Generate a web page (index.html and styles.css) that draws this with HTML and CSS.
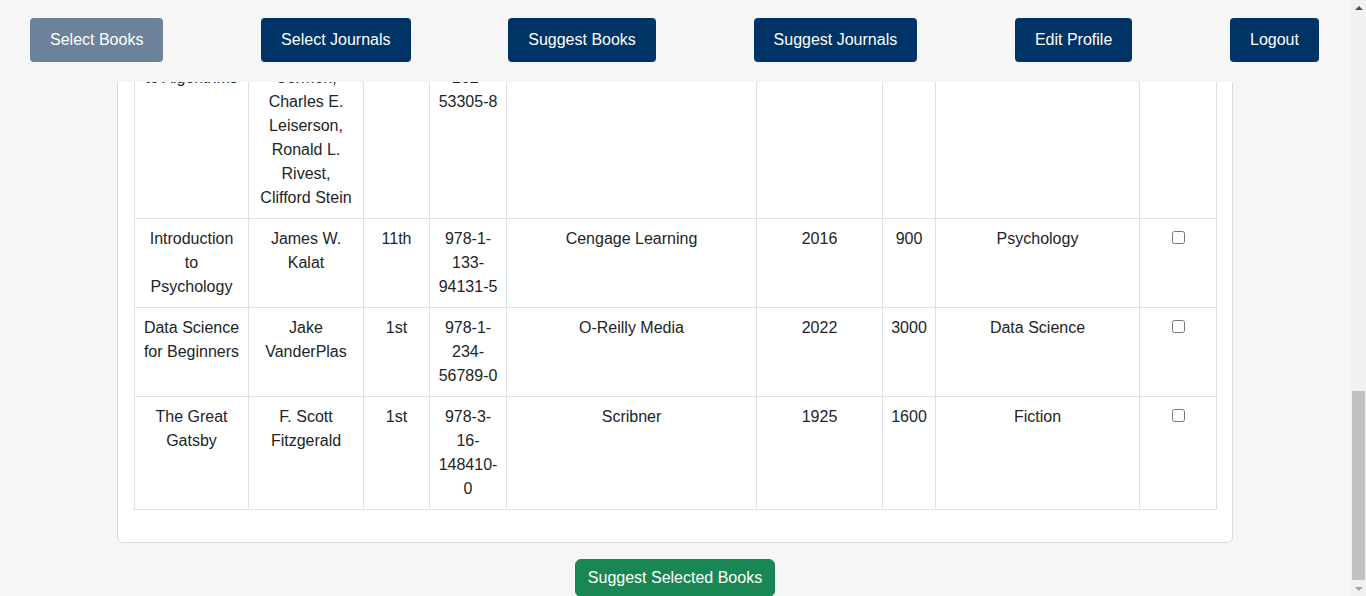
FILE: index.html
```html
<!DOCTYPE html>
<html lang="en">
<head>
<meta charset="utf-8">
<title>Suggest Books</title>
<link rel="stylesheet" href="styles.css">
</head>
<body>
<div class="viewport">
  <header class="topbar">
    <a class="nav-btn active" href="#">Select Books</a>
    <a class="nav-btn" href="#">Select Journals</a>
    <a class="nav-btn" href="#">Suggest Books</a>
    <a class="nav-btn" href="#">Suggest Journals</a>
    <a class="nav-btn" href="#">Edit Profile</a>
    <a class="nav-btn" href="#">Logout</a>
  </header>
  <div class="scroller">
    <main class="container">
      <h2 class="page-title">Select Books to Suggest</h2>
      <div class="card">
        <div class="card-body">
          <table class="books">
            <colgroup>
              <col class="c-title"><col class="c-author"><col class="c-ed"><col class="c-isbn"><col class="c-pub"><col class="c-year"><col class="c-price"><col class="c-cat"><col class="c-sel">
            </colgroup>
            <thead>
              <tr><th>Title</th><th>Author</th><th>Edition</th><th>ISBN</th><th>Publisher</th><th>Year</th><th>Price</th><th>Category</th><th>Select</th></tr>
            </thead>
            <tbody>
              <tr><td>Clean Code</td><td>Robert C. Martin</td><td>1st</td><td>978-0-13-235088-4</td><td>Prentice Hall</td><td>2008</td><td>2500</td><td>Programming</td><td><input type="checkbox"></td></tr>
              <tr><td>The Pragmatic Programmer</td><td>Andrew Hunt, David Thomas</td><td>2nd</td><td>978-0-13-595705-9</td><td>Addison-Wesley</td><td>2019</td><td>2800</td><td>Programming</td><td><input type="checkbox"></td></tr>
              <tr><td>Design Patterns</td><td>Erich Gamma, Richard Helm, Ralph Johnson, John Vlissides</td><td>1st</td><td>978-0-201-63361-0</td><td>Addison-Wesley</td><td>1994</td><td>3200</td><td>Software Engineering</td><td><input type="checkbox"></td></tr>
              <tr><td>Artificial Intelligence: A Modern Approach</td><td>Stuart Russell, Peter Norvig</td><td>4th</td><td>978-0-13-461099-3</td><td>Pearson</td><td>2020</td><td>4500</td><td>Artificial Intelligence</td><td><input type="checkbox"></td></tr>
              <tr><td>Operating System Concepts</td><td>Abraham Silberschatz</td><td>10th</td><td>978-1-119-80036-1</td><td>Wiley</td><td>2018</td><td>3500</td><td>Computer Science</td><td><input type="checkbox"></td></tr>
              <tr><td>Calculus</td><td>James Stewart</td><td>8th</td><td>978-1-285-74155-0</td><td>Cengage Learning</td><td>2015</td><td>2200</td><td>Mathematics</td><td><input type="checkbox"></td></tr>
              <tr><td>Sapiens</td><td>Yuval Noah Harari</td><td>1st</td><td>978-0-06-231609-7</td><td>Harper</td><td>2015</td><td>1200</td><td>History</td><td><input type="checkbox"></td></tr>
              <tr><td>To Kill a Mockingbird</td><td>Harper Lee</td><td>1st</td><td>978-0-06-112008-4</td><td>J. B. Lippincott</td><td>1960</td><td>800</td><td>Fiction</td><td><input type="checkbox"></td></tr>
              <tr><td>Introduction to Algorithms</td><td>Thomas H. Cormen, Charles E. Leiserson, Ronald L. Rivest, Clifford Stein</td><td>3rd</td><td>978-0-262-53305-8</td><td>MIT Press</td><td>2009</td><td>4000</td><td>Computer Science</td><td><input type="checkbox"></td></tr>
              <tr><td>Introduction to Psychology</td><td>James W. Kalat</td><td>11th</td><td>978-1-133-94131-5</td><td>Cengage Learning</td><td>2016</td><td>900</td><td>Psychology</td><td><input type="checkbox"></td></tr>
              <tr><td>Data Science for Beginners</td><td>Jake VanderPlas</td><td>1st</td><td>978-1-234-56789-0</td><td>O-Reilly Media</td><td>2022</td><td>3000</td><td>Data Science</td><td><input type="checkbox"></td></tr>
              <tr><td>The Great Gatsby</td><td>F. Scott Fitzgerald</td><td>1st</td><td>978-3-16-148410-0</td><td>Scribner</td><td>1925</td><td>1600</td><td>Fiction</td><td><input type="checkbox"></td></tr>
            </tbody>
          </table>
        </div>
      </div>
      <div class="actions">
        <button class="btn-success" type="button">Suggest Selected Books</button>
      </div>
    </main>
  </div>
</div>
<div class="scrollbar" aria-hidden="true">
  <span class="sb-arrow sb-up"></span>
  <span class="sb-track"><span class="sb-thumb"></span></span>
  <span class="sb-arrow sb-down"></span>
</div>
</body>
</html>
```
FILE: styles.css
```css
html, body {
  margin: 0;
  padding: 0;
  height: 100%;
  overflow: hidden;
}
body {
  display: flex;
  height: 100vh;
  background: #f6f6f6;
  font-family: "Liberation Sans", Arial, sans-serif;
  font-size: 16px;
  line-height: 1.5;
  color: #212529;
}
.viewport {
  flex: 1 1 auto;
  min-width: 0;
  display: flex;
  flex-direction: column;
  overflow: hidden;
}
.topbar {
  flex: none;
  display: flex;
  justify-content: space-between;
  align-items: flex-start;
  padding: 18px 32px 20px 30px;
  background: #f6f6f6;
}
.nav-btn {
  display: block;
  padding: 13px 20px;
  font-size: 16px;
  line-height: 18px;
  color: #ffffff;
  background: #003366;
  border-radius: 4px;
  text-decoration: none;
}
.nav-btn.active {
  background: #6c819a;
}
.scroller {
  flex: 1 1 auto;
  min-height: 0;
  overflow: hidden;
  display: flex;
  flex-direction: column;
  justify-content: flex-end;
  padding-right: 1px;
}
.container {
  flex: none;
  width: 1116px;
  margin: 0 auto -1px;
  padding: 24px 0 0;
}
.page-title {
  margin: 0 0 16px;
  font-size: 32px;
  line-height: 38px;
  font-weight: 500;
  text-align: center;
}
.card {
  background: #ffffff;
  border: 1px solid #dadada;
  border-radius: 6px;
}
.card-body {
  padding: 16px;
}
.books {
  width: 100%;
  border-collapse: collapse;
  table-layout: fixed;
  margin-bottom: 16px;
}
.books th, .books td {
  border: 1px solid #dee2e6;
  padding: 8px;
  text-align: center;
  vertical-align: top;
}
.books th {
  font-weight: bold;
}
.books input[type="checkbox"] {
  margin: 0;
  width: 13px;
  height: 13px;
}
.c-title { width: 114px; }
.c-author { width: 115px; }
.c-ed { width: 66px; }
.c-isbn { width: 77px; }
.c-pub { width: 250px; }
.c-year { width: 126px; }
.c-price { width: 53px; }
.c-cat { width: 204px; }
.c-sel { width: 77px; }
.actions {
  display: flex;
  justify-content: center;
  margin-top: 16px;
}
.btn-success {
  display: block;
  padding: 6px 12px;
  font-family: inherit;
  font-size: 16px;
  line-height: 24px;
  color: #ffffff;
  background: #198754;
  border: 1px solid #198754;
  border-radius: 6px;
}
.scrollbar {
  flex: none;
  width: 15px;
  display: flex;
  flex-direction: column;
  background: #f1f1f1;
}
.sb-arrow {
  flex: none;
  height: 15px;
  display: flex;
  align-items: center;
  justify-content: center;
}
.sb-up::before {
  content: "";
  border-left: 4px solid transparent;
  border-right: 4px solid transparent;
  border-bottom: 4px solid #505050;
}
.sb-down::before {
  content: "";
  border-left: 4px solid transparent;
  border-right: 4px solid transparent;
  border-top: 4px solid #a3a3a3;
}
.sb-track {
  flex: 1 1 auto;
  display: flex;
  flex-direction: column;
  justify-content: flex-end;
  padding-bottom: 1px;
}
.sb-thumb {
  display: block;
  height: 189px;
  margin: 0 1px 0 1px;
  background: #c1c1c1;
}
```
